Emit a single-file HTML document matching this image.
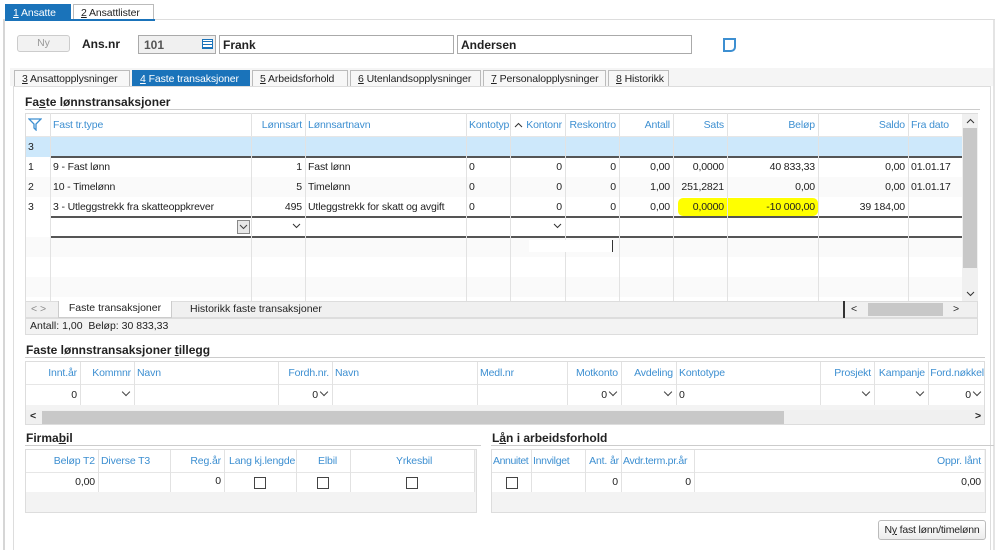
<!DOCTYPE html>
<html><head><meta charset="utf-8"><style>
*{box-sizing:border-box;margin:0;padding:0}
body{width:999px;height:550px;background:#fff;font-family:"Liberation Sans",Arial,sans-serif;font-size:10.5px;color:#222;position:relative;overflow:hidden}
.a{position:absolute}
.tab{position:absolute;height:16px;border:1px solid #bbb;border-bottom:none;background:#fff;padding:2px 6px 0 7px;font-size:10.5px;white-space:nowrap;letter-spacing:-0.1px}
.tab.on{background:#1a73ba;color:#fff;border-color:#1a73ba}
.hd{color:#3d8fd1}
.cell{position:absolute;white-space:nowrap;overflow:hidden;line-height:20px;padding:0 3px;letter-spacing:-0.15px}
.r{text-align:right}
.vl{position:absolute;width:1px;background:#e2e2e2}
.hl{position:absolute;height:1px;background:#e6e6e6}
.cb{position:absolute;width:12px;height:12px;border:1px solid #444;background:#fff}
.ttl{position:absolute;font-weight:bold;font-size:12px}
.ch{display:inline-block;width:6px;height:6px;border-right:1px solid #444;border-bottom:1px solid #444;transform:rotate(45deg);margin:0 2px 3px 3px}
</style></head><body>
<div class="a" style="left:3px;top:19px;width:2px;height:531px;background:#d6d6d6"></div>
<div class="a" style="left:993px;top:19px;width:2px;height:531px;background:#e4e4e4"></div>
<div class="a" style="left:3px;top:19px;width:992px;height:1px;background:#ddd"></div>
<div class="tab on" style="left:5px;top:4px;width:66px"><u>1</u> Ansatte</div>
<div class="tab" style="left:73px;top:4px;width:81px"><u>2</u> Ansattlister</div>
<div class="a" style="left:5px;top:19px;width:150px;height:2px;background:#1a73ba"></div>
<div class="a" style="left:17px;top:35px;width:53px;height:17px;border:1px solid #ccc;border-radius:3px;background:#f2f2f2;color:#999;text-align:center;line-height:15px">Ny</div>
<div class="a" style="left:82px;top:37px;font-weight:bold;font-size:12px">Ans.nr</div>
<div class="a" style="left:138px;top:35px;width:78px;height:19px;border:1px solid #aaa;background:#f0f0f0;padding:2px 5px;font-weight:bold;color:#555;font-size:12px">101</div>
<div class="a" style="left:202px;top:39px;width:11px;height:10px;border:1px solid #1a73ba;background:repeating-linear-gradient(#fff 0 1px,#1a73ba 1px 2px,#fff 2px 3px)"></div>
<div class="a" style="left:219px;top:35px;width:235px;height:19px;border:1px solid #aaa;padding:2px 3px;font-weight:bold;font-size:12px">Frank</div>
<div class="a" style="left:457px;top:35px;width:235px;height:19px;border:1px solid #aaa;padding:2px 3px;font-weight:bold;font-size:12px">Andersen</div>
<div class="a" style="left:723px;top:38px;width:13px;height:14px;border:2px solid #3d8fd1;border-radius:0 0 5px 0"></div>
<div class="a" style="left:10px;top:68px;width:983px;height:18px;background:#f5f5f5"></div>
<div class="tab" style="left:14px;top:70px;width:116px;background:#f7f7f7"><u>3</u> Ansattopplysninger</div>
<div class="tab on" style="left:132px;top:70px;width:118px"><u>4</u> Faste transaksjoner</div>
<div class="tab" style="left:252px;top:70px;width:96px;background:#f7f7f7"><u>5</u> Arbeidsforhold</div>
<div class="tab" style="left:350px;top:70px;width:131px;background:#f7f7f7"><u>6</u> Utenlandsopplysninger</div>
<div class="tab" style="left:483px;top:70px;width:123px;background:#f7f7f7"><u>7</u> Personalopplysninger</div>
<div class="tab" style="left:608px;top:70px;width:61px;background:#f7f7f7"><u>8</u> Historikk</div>
<div class="a" style="left:13px;top:86px;width:657px;height:1px;background:#1a73ba"></div>
<div class="a" style="left:13px;top:86px;width:978px;height:464px;border:1px solid #ddd;border-bottom:none"></div>
<div class="ttl" style="left:25px;top:95px">Fa<u>s</u>te lønnstransaksjoner</div>
<div class="a" style="left:25px;top:109px;width:955px;height:1px;background:#ccc"></div>
<div class="a" style="left:25px;top:113px;width:953px;height:190px;border:1px solid #ddd;background:#fff"></div>
<div class="a" style="left:26px;top:137px;width:936px;height:20px;background:#cde8fb"></div>
<div class="a" style="left:26px;top:177px;width:936px;height:20px;background:#fafafa"></div>
<div class="a" style="left:26px;top:237px;width:936px;height:20px;background:#fafafa"></div>
<div class="a" style="left:26px;top:277px;width:936px;height:20px;background:#fafafa"></div>
<div class="a" style="left:50px;top:156px;width:912px;height:2px;background:#555"></div>
<div class="a" style="left:50px;top:216px;width:912px;height:2px;background:#555"></div>
<div class="a" style="left:50px;top:236px;width:912px;height:2px;background:#555"></div>
<div class="a" style="left:678px;top:198px;width:140px;height:18px;background:#ffff00;border-radius:5px"></div>
<div class="vl" style="left:50px;top:113px;height:189px"></div>
<div class="vl" style="left:251px;top:113px;height:189px"></div>
<div class="vl" style="left:305px;top:113px;height:189px"></div>
<div class="vl" style="left:466px;top:113px;height:189px"></div>
<div class="vl" style="left:510px;top:113px;height:189px"></div>
<div class="vl" style="left:565px;top:113px;height:189px"></div>
<div class="vl" style="left:619px;top:113px;height:189px"></div>
<div class="vl" style="left:673px;top:113px;height:189px"></div>
<div class="vl" style="left:727px;top:113px;height:189px"></div>
<div class="vl" style="left:818px;top:113px;height:189px"></div>
<div class="vl" style="left:908px;top:113px;height:189px"></div>
<div class="hl" style="left:26px;top:136px;width:936px"></div>
<svg class="a" style="left:28px;top:118px" width="14" height="13"><path d="M1 1H13L8 6V12L6 10V6Z" fill="none" stroke="#3d8fd1" stroke-width="1.3"/></svg>
<div class="cell hd" style="left:50px;top:115px">Fast tr.type</div>
<div class="cell hd r" style="left:251px;top:115px;width:54px">Lønnsart</div>
<div class="cell hd" style="left:305px;top:115px">Lønnsartnavn</div>
<div class="cell hd" style="left:466px;top:115px;width:44px">Kontotyp</div>
<div class="cell hd r" style="left:510px;top:115px;width:55px"><svg width="9" height="6" style="margin-right:3px"><path d="M1 5L4.5 1.5L8 5" fill="none" stroke="#333"/></svg>Kontonr</div>
<div class="cell hd r" style="left:565px;top:115px;width:54px">Reskontro</div>
<div class="cell hd r" style="left:619px;top:115px;width:54px">Antall</div>
<div class="cell hd r" style="left:673px;top:115px;width:54px">Sats</div>
<div class="cell hd r" style="left:727px;top:115px;width:91px">Beløp</div>
<div class="cell hd r" style="left:818px;top:115px;width:90px">Saldo</div>
<div class="cell hd" style="left:908px;top:115px">Fra dato</div>
<div class="cell" style="left:25px;top:137px">3</div>
<div class="cell" style="left:25px;top:157px">1</div><div class="cell" style="left:50px;top:157px">9 - Fast lønn</div><div class="cell r" style="left:251px;top:157px;width:54px">1</div><div class="cell" style="left:305px;top:157px">Fast lønn</div><div class="cell" style="left:466px;top:157px">0</div><div class="cell r" style="left:510px;top:157px;width:55px">0</div><div class="cell r" style="left:565px;top:157px;width:54px">0</div><div class="cell r" style="left:619px;top:157px;width:54px">0,00</div><div class="cell r" style="left:673px;top:157px;width:54px">0,0000</div><div class="cell r" style="left:727px;top:157px;width:91px">40 833,33</div><div class="cell r" style="left:818px;top:157px;width:90px">0,00</div><div class="cell" style="left:908px;top:157px">01.01.17</div>
<div class="cell" style="left:25px;top:177px">2</div><div class="cell" style="left:50px;top:177px">10 - Timelønn</div><div class="cell r" style="left:251px;top:177px;width:54px">5</div><div class="cell" style="left:305px;top:177px">Timelønn</div><div class="cell" style="left:466px;top:177px">0</div><div class="cell r" style="left:510px;top:177px;width:55px">0</div><div class="cell r" style="left:565px;top:177px;width:54px">0</div><div class="cell r" style="left:619px;top:177px;width:54px">1,00</div><div class="cell r" style="left:673px;top:177px;width:54px">251,2821</div><div class="cell r" style="left:727px;top:177px;width:91px">0,00</div><div class="cell r" style="left:818px;top:177px;width:90px">0,00</div><div class="cell" style="left:908px;top:177px">01.01.17</div>
<div class="cell" style="left:25px;top:197px">3</div><div class="cell" style="left:50px;top:197px">3 - Utleggstrekk fra skatteoppkrever</div><div class="cell r" style="left:251px;top:197px;width:54px">495</div><div class="cell" style="left:305px;top:197px">Utleggstrekk for skatt og avgift</div><div class="cell" style="left:466px;top:197px">0</div><div class="cell r" style="left:510px;top:197px;width:55px">0</div><div class="cell r" style="left:565px;top:197px;width:54px">0</div><div class="cell r" style="left:619px;top:197px;width:54px">0,00</div><div class="cell r" style="left:673px;top:197px;width:54px">0,0000</div><div class="cell r" style="left:727px;top:197px;width:91px">-10 000,00</div><div class="cell r" style="left:818px;top:197px;width:90px">39 184,00</div>
<div class="a" style="left:237px;top:220px;width:13px;height:14px;border:1px solid #888;background:#e8e8e8"><svg width="11" height="12"><path d="M2 4L5.5 7.5L9 4" fill="none" stroke="#444"/></svg></div>
<svg class="a" style="left:292px;top:223px" width="9" height="6"><path d="M1 1L4.5 4.5L8 1" fill="none" stroke="#333"/></svg>
<svg class="a" style="left:553px;top:223px" width="9" height="6"><path d="M1 1L4.5 4.5L8 1" fill="none" stroke="#333"/></svg>
<div class="a" style="left:529px;top:240px;width:83px;height:12px;background:#fff"></div>
<div class="a" style="left:612px;top:240px;width:1px;height:12px;background:#333"></div>
<div class="a" style="left:962px;top:114px;width:16px;height:188px;background:#f0f0f0"></div>
<div class="a" style="left:963px;top:128px;width:14px;height:140px;background:#c8c8c8"></div>
<svg class="a" style="left:966px;top:118px" width="9" height="6"><path d="M1 5L4.5 1.5L8 5" fill="none" stroke="#333"/></svg>
<svg class="a" style="left:966px;top:291px" width="9" height="6"><path d="M1 1L4.5 4.5L8 1" fill="none" stroke="#333"/></svg>
<div class="a" style="left:25px;top:301px;width:953px;height:17px;background:#f0f0f0;border:1px solid #ddd"></div>
<div class="a" style="left:31px;top:303px;color:#888">&lt; &gt;</div>
<div class="a" style="left:58px;top:301px;width:114px;height:17px;background:#fff;border:1px solid #ccc;border-top:none;text-align:center;line-height:15px">Faste transaksjoner</div>
<div class="a" style="left:190px;top:303px">Historikk faste transaksjoner</div>
<div class="a" style="left:843px;top:301px;width:2px;height:17px;background:#333"></div>
<div class="a" style="left:868px;top:303px;width:75px;height:13px;background:#c8c8c8"></div>
<div class="a" style="left:851px;top:303px">&lt;</div><div class="a" style="left:953px;top:303px">&gt;</div>
<div class="a" style="left:25px;top:318px;width:953px;height:17px;background:#f3f3f3;border:1px solid #ddd;padding:1px 4px">Antall: 1,00&nbsp; Beløp: 30 833,33</div>
<div class="ttl" style="left:26px;top:343px">Faste lønnstransaksjoner <u>t</u>illegg</div>
<div class="a" style="left:25px;top:357px;width:960px;height:1px;background:#ccc"></div>
<div class="a" style="left:25px;top:361px;width:960px;height:64px;border:1px solid #ddd;background:#fff"></div>
<div class="a" style="left:26px;top:405px;width:958px;height:5px;background:#f3f3f3"></div>
<div class="hl" style="left:26px;top:384px;width:958px"></div>
<div class="vl" style="left:80px;top:362px;height:43px"></div><div class="vl" style="left:134px;top:362px;height:43px"></div><div class="vl" style="left:278px;top:362px;height:43px"></div><div class="vl" style="left:332px;top:362px;height:43px"></div><div class="vl" style="left:477px;top:362px;height:43px"></div><div class="vl" style="left:567px;top:362px;height:43px"></div><div class="vl" style="left:621px;top:362px;height:43px"></div><div class="vl" style="left:676px;top:362px;height:43px"></div><div class="vl" style="left:820px;top:362px;height:43px"></div><div class="vl" style="left:874px;top:362px;height:43px"></div><div class="vl" style="left:928px;top:362px;height:43px"></div>
<div class="cell hd r" style="left:25px;top:363px;width:55px">Innt.år</div>
<div class="cell hd r" style="left:80px;top:363px;width:54px">Kommnr</div>
<div class="cell hd" style="left:134px;top:363px">Navn</div>
<div class="cell hd r" style="left:278px;top:363px;width:54px">Fordh.nr.</div>
<div class="cell hd" style="left:332px;top:363px">Navn</div>
<div class="cell hd" style="left:477px;top:363px">Medl.nr</div>
<div class="cell hd r" style="left:567px;top:363px;width:54px">Motkonto</div>
<div class="cell hd r" style="left:621px;top:363px;width:55px">Avdeling</div>
<div class="cell hd" style="left:676px;top:363px">Kontotype</div>
<div class="cell hd r" style="left:820px;top:363px;width:54px">Prosjekt</div>
<div class="cell hd r" style="left:874px;top:363px;width:54px">Kampanje</div>
<div class="cell hd r" style="left:928px;top:363px;width:57px;padding:0 1px">Ford.nøkkel</div>
<div class="cell r" style="left:25px;top:385px;width:55px">0</div>
<div class="cell r" style="left:80px;top:385px;width:54px"><span class="ch"></span></div>
<div class="cell r" style="left:278px;top:385px;width:54px">0<span class="ch"></span></div>
<div class="cell r" style="left:567px;top:385px;width:54px">0<span class="ch"></span></div>
<div class="cell r" style="left:621px;top:385px;width:55px"><span class="ch"></span></div>
<div class="cell" style="left:676px;top:385px">0</div>
<div class="cell r" style="left:820px;top:385px;width:54px"><span class="ch"></span></div>
<div class="cell r" style="left:874px;top:385px;width:54px"><span class="ch"></span></div>
<div class="cell r" style="left:928px;top:385px;width:57px">0<span class="ch"></span></div>
<div class="a" style="left:26px;top:410px;width:958px;height:14px;background:#f0f0f0"></div>
<div class="a" style="left:42px;top:411px;width:742px;height:13px;background:#c8c8c8"></div>
<div class="a" style="left:30px;top:410px;font-weight:bold">&lt;</div><div class="a" style="left:975px;top:410px;font-weight:bold">&gt;</div>
<div class="ttl" style="left:26px;top:431px">Firma<u>b</u>il</div>
<div class="a" style="left:25px;top:445px;width:456px;height:1px;background:#ccc"></div>
<div class="a" style="left:25px;top:449px;width:452px;height:64px;border:1px solid #ddd;background:#f3f3f3"></div>
<div class="a" style="left:26px;top:450px;width:448px;height:42px;background:#fff"></div>
<div class="hl" style="left:26px;top:472px;width:448px"></div>
<div class="vl" style="left:98px;top:450px;height:42px"></div><div class="vl" style="left:170px;top:450px;height:42px"></div><div class="vl" style="left:224px;top:450px;height:42px"></div><div class="vl" style="left:296px;top:450px;height:42px"></div><div class="vl" style="left:350px;top:450px;height:42px"></div><div class="vl" style="left:474px;top:450px;height:42px"></div>
<div class="cell hd r" style="left:25px;top:451px;width:73px">Beløp T2</div>
<div class="cell hd" style="left:98px;top:451px">Diverse T3</div>
<div class="cell hd r" style="left:170px;top:451px;width:54px">Reg.år</div>
<div class="cell hd" style="left:228px;top:451px;width:68px;padding:0 1px">Lang kj.lengde</div>
<div class="cell hd" style="left:315px;top:451px">Elbil</div>
<div class="cell hd" style="left:393px;top:451px">Yrkesbil</div>
<div class="cell r" style="left:25px;top:472px;width:73px">0,00</div>
<div class="cell r" style="left:170px;top:471px;width:54px">0</div>
<div class="cb" style="left:254px;top:477px"></div><div class="cb" style="left:317px;top:477px"></div><div class="cb" style="left:406px;top:477px"></div>
<div class="ttl" style="left:492px;top:431px">L<u>å</u>n i arbeidsforhold</div>
<div class="a" style="left:491px;top:445px;width:503px;height:1px;background:#ccc"></div>
<div class="a" style="left:491px;top:449px;width:495px;height:64px;border:1px solid #ddd;background:#f3f3f3"></div>
<div class="a" style="left:492px;top:450px;width:492px;height:42px;background:#fff"></div>
<div class="hl" style="left:492px;top:472px;width:492px"></div>
<div class="vl" style="left:531px;top:450px;height:42px"></div><div class="vl" style="left:585px;top:450px;height:42px"></div><div class="vl" style="left:621px;top:450px;height:42px"></div><div class="vl" style="left:694px;top:450px;height:42px"></div>
<div class="cell hd" style="left:492px;top:451px;width:39px;padding:0 1px;letter-spacing:-0.4px">Annuitet</div>
<div class="cell hd" style="left:532px;top:451px;padding:0 1px;letter-spacing:-0.3px">Innvilget</div>
<div class="cell hd r" style="left:585px;top:451px;width:36px;padding:0 2px">Ant. år</div>
<div class="cell hd" style="left:621px;top:451px;width:73px;padding:0 2px;letter-spacing:-0.3px">Avdr.term.pr.år</div>
<div class="cell hd r" style="left:694px;top:451px;width:290px">Oppr. lånt</div>
<div class="cb" style="left:506px;top:477px"></div>
<div class="cell r" style="left:585px;top:472px;width:36px">0</div>
<div class="cell r" style="left:621px;top:472px;width:73px">0</div>
<div class="cell r" style="left:694px;top:472px;width:290px">0,00</div>
<div class="a" style="left:878px;top:520px;width:108px;height:20px;border:1px solid #bbb;border-radius:3px;background:linear-gradient(#fff,#ececec);text-align:center;line-height:18px;letter-spacing:-0.2px">N<u>y</u> fast lønn/timelønn</div>
</body></html>
